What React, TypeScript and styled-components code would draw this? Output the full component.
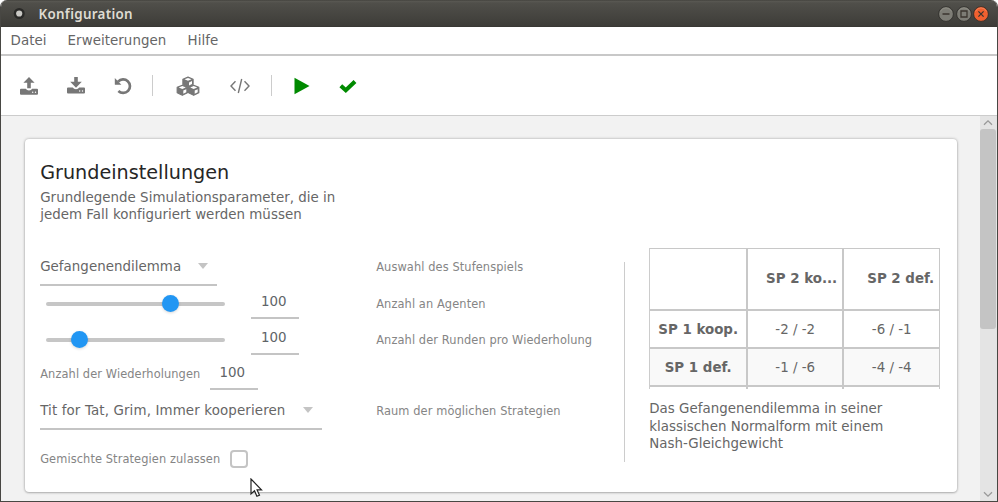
import React from 'react';
import styled, { createGlobalStyle } from 'styled-components';

const GlobalStyle = createGlobalStyle`
  * { box-sizing: border-box; }
  html, body { margin: 0; padding: 0; background: #fff; overflow: hidden; }
  body { font-family: "DejaVu Sans", Verdana, sans-serif; color: #666; }
`;

const Window = styled.div`
  position: relative;
  width: 998px;
  height: 502px;
  display: flex;
  flex-direction: column;
  border: 1px solid #484743;
  border-top: 0;
  border-radius: 7px 7px 0 0;
  overflow: hidden;
  background: #fff;
`;

const TitleBar = styled.header`
  flex: none;
  height: 27px;
  margin: 0 -1px;
  padding: 0 9px 0 12px;
  display: flex;
  align-items: center;
  background: linear-gradient(#3b3a36 0, #5a5953 1px, #504f4a 3px, #3d3c38 26px, #353430 27px);
`;

const Title = styled.h1`
  margin: 0 auto 0 10.5px;
  font: 600 13.4px/26px "Noto Sans", sans-serif;
  letter-spacing: 0.3px;
  color: #dfdbd2;
`;

const WindowButtons = styled.div`
  display: flex;
  gap: 1.5px;
`;

const MenuBar = styled.nav`
  flex: none;
  height: 28.5px;
  padding: 0 9.6px;
  display: flex;
  gap: 22px;
  border-bottom: 2px solid #c8c8c8;
`;

const MenuItem = styled.span<{ $width: number }>`
  width: ${p => p.$width}px;
  font-size: 13.4px;
  letter-spacing: 0.05px;
  line-height: 27px;
  white-space: nowrap;
`;

const Toolbar = styled.div`
  flex: none;
  height: 60.5px;
  padding: 1.5px 0 0 9px;
  display: flex;
  align-items: center;
  border-bottom: 1px solid #ccc;
`;

const ToolButton = styled.button<{ $width: number; $after: number }>`
  width: ${p => p.$width}px;
  height: 42px;
  margin: 0 ${p => p.$after}px 0 0;
  padding: 0;
  border: 0;
  border-radius: 4px;
  background: transparent;
  display: flex;
  align-items: center;
  justify-content: center;
`;

const ToolDivider = styled.span<{ $after: number }>`
  width: 1px;
  height: 21px;
  margin: 0 ${p => p.$after}px 1px 0;
  background: #ccc;
`;

const Body = styled.div`
  flex: 1;
  min-height: 0;
  display: flex;
  justify-content: space-between;
  background: #f2f2f2;
`;

const Card = styled.main`
  width: 932px;
  height: 353px;
  margin: 23px 0 0 24px;
  padding: 20px 15px 0 15.2px;
  background: #fff;
  border-radius: 4px;
  box-shadow: 0 0 3px rgba(0, 0, 0, 0.32), 0 1px 2px rgba(0, 0, 0, 0.16);
`;

const Heading = styled.h2`
  margin: 0;
  font-size: 19.2px;
  font-weight: 400;
  line-height: 27px;
  color: #262626;
`;

const Paragraph = styled.p<{ $width: number; $top?: number }>`
  margin: ${p => p.$top ?? 0}px 0 0;
  width: ${p => p.$width}px;
  font-size: 13.4px;
  line-height: 17.3px;
  letter-spacing: 0.03px;
`;

const Columns = styled.div`
  margin-top: 24.4px;
  display: flex;
  align-items: flex-start;
`;

const Form = styled.div`
  width: 584px;
`;

const Row = styled.div<{ $height: number }>`
  height: ${p => p.$height}px;
  display: grid;
  grid-template-columns: 336px 1fr;
`;

const Control = styled.div`
  display: flex;
  align-items: flex-start;
`;

const Label = styled.span<{ $top?: number }>`
  padding-top: ${p => p.$top ?? 0}px;
  font-size: 11.4px;
  line-height: 16px;
  letter-spacing: 0.1px;
  color: #858585;
  white-space: nowrap;
`;

const Select = styled.div<{ $width: number; $spacing?: number }>`
  width: ${p => p.$width}px;
  height: 38px;
  padding: 1px 9px 0 0;
  display: flex;
  align-items: center;
  justify-content: space-between;
  border-bottom: 2px solid #c4c4c4;
  font-size: 13.4px;
  letter-spacing: ${p => p.$spacing ?? 0.03}px;
  white-space: nowrap;
`;

const Caret = styled.span`
  border: 5px solid transparent;
  border-top: 6px solid #c4c4c4;
  border-bottom: 0;
`;

const Slider = styled.div`
  width: 179px;
  height: 4px;
  margin: 16px 26px 0 6px;
  display: flex;
  align-items: center;
  border-radius: 2px;
  background: #c6c6c6;
`;

const Thumb = styled.span<{ $offset: number }>`
  width: 17px;
  height: 17px;
  margin-left: ${p => p.$offset}px;
  border-radius: 50%;
  background: #2196f3;
  box-shadow: 0 1px 3px rgba(0, 0, 0, 0.16);
`;

const NumberField = styled.span<{ $before?: number }>`
  width: 48px;
  height: 33px;
  margin-left: ${p => p.$before ?? 0}px;
  padding-right: 3px;
  border-bottom: 2px solid #c4c4c4;
  font-size: 13.4px;
  line-height: 32px;
  text-align: center;
  color: #606468;
`;

const Checkbox = styled.span`
  width: 18px;
  height: 18px;
  margin-left: 10px;
  border: 2px solid #c4c4c4;
  border-radius: 4px;
`;

const Divider = styled.div`
  width: 1px;
  height: 200px;
  margin: 14px 24px 0 0;
  background: #ccc;
`;

const GameInfo = styled.section`
  width: 292px;
`;

const Matrix = styled.div`
  display: grid;
  grid-template-columns: 98px 96px 96px;
  grid-template-rows: 63px 38.5px 38px 2px;
  margin-bottom: 11px;
  width: 291px;
  border-left: 1px solid #ccc;
`;

const Cell = styled.div<{ $head?: boolean; $bold?: boolean; $shade?: boolean; $last?: boolean }>`
  display: flex;
  align-items: center;
  justify-content: ${p => (p.$head ? 'flex-end' : 'center')};
  padding-right: ${p => (p.$head ? 5 : 0)}px;
  border-right: ${p => (p.$last ? 1 : 2)}px solid #c8c8c8;
  border-bottom: 2px solid #c8c8c8;
  border-top: ${p => (p.$head ? '1px solid #c8c8c8' : '0')};
  background: ${p => (p.$shade ? '#f9f9f9' : '#fff')};
  font-size: 13.4px;
  font-weight: ${p => (p.$bold ? 700 : 400)};
  white-space: nowrap;
`;

const Stub = styled.div<{ $last?: boolean }>`
  border-right: ${p => (p.$last ? 1 : 2)}px solid #c8c8c8;
`;

const Scrollbar = styled.div`
  width: 17px;
  padding: 0 1px 0 0;
  display: flex;
  flex-direction: column;
  align-items: center;
  background: #e4e4e4;
`;

const ScrollArrow = styled.span`
  height: 13px;
  display: flex;
  align-items: center;
`;

const ScrollThumb = styled.span`
  width: 16px;
  height: 200px;
  margin-bottom: auto;
  border-radius: 3px;
  background: #c4c4c4;
`;

const Pointer = styled.svg`
  position: absolute;
  left: 248px;
  top: 478px;
`;

const DriveIcon = ({ down }: { down?: boolean }) => (
  <svg width="20" height="20" viewBox="0 0 20 20" fill="#777">
    {down
      ? <path d="M8.2 .9h3.6v4.9h4L10 11.8 4.2 5.8h4z" />
      : <path d="M10 1.1l5.6 5.7h-3.8v5.5H8.2V6.8H4.4z" />}
    <path transform={down ? 'translate(0 -1.2)' : undefined} d="M2 12.8h4.8q1 1.7 3.2 1.7t3.2-1.7H18q1 0 1 1v4q0 1-1 1H2q-1 0-1-1v-4q0-1 1-1z" />
    <circle cx="13.7" cy={down ? 15 : 16.2} r=".7" fill="#fff" />
    <circle cx="16.5" cy={down ? 15 : 16.2} r=".7" fill="#fff" />
  </svg>
);

const UndoIcon = () => (
  <svg width="18" height="18" viewBox="0 0 18 18" fill="none">
    <path d="M4.1 4.6A6.8 6.8 0 1 1 4.4 14" stroke="#777" strokeWidth="2.7" />
    <path d="M.8 1.1v6.2q0 .5.5.5h6.1z" fill="#777" />
  </svg>
);

const Cube = ({ x, y }: { x: number; y: number }) => (
  <g transform={`translate(${x} ${y})`}>
    <path d="M6 .9l5.1 2.1v5.4L6 10.9.9 8.4V3z" fill="#777" stroke="#777" strokeWidth="1.2" strokeLinejoin="round" />
    <path d="M6 1.7l3.5 1.4L6 4.6 2.5 3.1zM7 6.2l3-1.3v2.9L7 9.4z" fill="#fff" />
  </g>
);

const CubesIcon = () => (
  <svg width="24" height="20" viewBox="0 0 24 20">
    <Cube x={6} y={0.2} />
    <Cube x={0.3} y={8.4} />
    <Cube x={11.7} y={8.4} />
  </svg>
);

const CodeIcon = () => (
  <svg width="20" height="16" viewBox="0 0 20 16" fill="none" stroke="#777" strokeWidth="1.4">
    <path d="M5.5 3.3L1 8l4.5 4.7M14.5 3.3L19 8l-4.5 4.7M11.7 1L8.3 15" />
  </svg>
);

const PlayIcon = () => (
  <svg width="16" height="18" viewBox="0 0 16 18"><path d="M.5.7L15.5 9 .5 17.3z" fill="#008a00" /></svg>
);

const CheckIcon = () => (
  <svg width="18" height="16" viewBox="0 0 18 16" fill="none">
    <path d="M1.8 7.7l5 4.6L16 3.5" stroke="#008a00" strokeWidth="4.1" />
  </svg>
);

const AppIcon = () => (
  <svg width="16" height="16" viewBox="0 0 16 16">
    <circle cx="7.2" cy="7.5" r="5.5" fill="#292927" />
    <circle cx="7.2" cy="7.5" r="3.1" fill="#c9c8c4" />
  </svg>
);

type WindowButtonKind = 'minimize' | 'maximize' | 'close';

const buttonMarks: Record<WindowButtonKind, string> = {
  minimize: 'M4.5 8h7',
  maximize: 'M5 5h6v6H5z',
  close: 'M5.4 5.4l5.2 5.2M10.6 5.4l-5.2 5.2',
};

const WindowButton = ({ kind }: { kind: WindowButtonKind }) => (
  <svg width="16" height="16" viewBox="0 0 16 16">
    <circle cx="8" cy="8" r="7.4" fill={kind === 'close' ? '#f0602f' : '#7d7c75'} stroke="#302f2b" strokeWidth=".9" />
    <path d="M2.5 5.5a6 6 0 0 1 11 0" fill="none" stroke={kind === 'close' ? '#f58a63' : '#918f87'} strokeWidth=".8" />
    <path d={buttonMarks[kind]} fill="none" stroke="#3b352f" strokeWidth="1.3" />
  </svg>
);

const Chevron = ({ down }: { down?: boolean }) => (
  <svg width="10" height="7" viewBox="0 0 10 7">
    <path d={down ? 'M1 1.2l4 4 4-4' : 'M1 5.8l4-4 4 4'} fill="none" stroke="#999" strokeWidth="1.3" />
  </svg>
);

export default function App() {
  return (
    <>
      <GlobalStyle />
      <Window>
        <TitleBar>
          <AppIcon />
          <Title>Konfiguration</Title>
          <WindowButtons>
            <WindowButton kind="minimize" />
            <WindowButton kind="maximize" />
            <WindowButton kind="close" />
          </WindowButtons>
        </TitleBar>
        <MenuBar>
          <MenuItem $width={35}>Datei</MenuItem>
          <MenuItem $width={98}>Erweiterungen</MenuItem>
          <MenuItem $width={32}>Hilfe</MenuItem>
        </MenuBar>
        <Toolbar>
          <ToolButton $width={38} $after={9}><DriveIcon /></ToolButton>
          <ToolButton $width={38} $after={9}><DriveIcon down /></ToolButton>
          <ToolButton $width={37} $after={11}><UndoIcon /></ToolButton>
          <ToolDivider $after={13} />
          <ToolButton $width={43} $after={11}><CubesIcon /></ToolButton>
          <ToolButton $width={40} $after={11}><CodeIcon /></ToolButton>
          <ToolDivider $after={12.5} />
          <ToolButton $width={35} $after={9}><PlayIcon /></ToolButton>
          <ToolButton $width={39} $after={0}><CheckIcon /></ToolButton>
        </Toolbar>
        <Body>
          <Card>
            <Heading>Grundeinstellungen</Heading>
            <Paragraph $width={305} $top={3}>Grundlegende Simulationsparameter, die in jedem Fall konfiguriert werden müssen</Paragraph>
            <Columns>
              <Form>
                <Row $height={38}>
                  <Control><Select $width={177}>Gefangenendilemma<Caret /></Select></Control>
                  <Label $top={11}>Auswahl des Stufenspiels</Label>
                </Row>
                <Row $height={36}>
                  <Control>
                    <Slider><Thumb $offset={116} /></Slider>
                    <NumberField>100</NumberField>
                  </Control>
                  <Label $top={10}>Anzahl an Agenten</Label>
                </Row>
                <Row $height={35}>
                  <Control>
                    <Slider><Thumb $offset={25} /></Slider>
                    <NumberField>100</NumberField>
                  </Control>
                  <Label $top={10}>Anzahl der Runden pro Wiederholung</Label>
                </Row>
                <Row $height={35}>
                  <Control>
                    <Label $top={9}>Anzahl der Wiederholungen</Label>
                    <NumberField $before={9.5}>100</NumberField>
                  </Control>
                </Row>
                <Row $height={58}>
                  <Control><Select $width={282} $spacing={0.13}>Tit for Tat, Grim, Immer kooperieren<Caret /></Select></Control>
                  <Label $top={11}>Raum der möglichen Strategien</Label>
                </Row>
                <Row $height={18}>
                  <Control>
                    <Label $top={1}>Gemischte Strategien zulassen</Label>
                    <Checkbox />
                  </Control>
                </Row>
              </Form>
              <Divider />
              <GameInfo>
                <Matrix>
                  <Cell $head />
                  <Cell $head $bold>SP 2 ko...</Cell>
                  <Cell $head $bold $last>SP 2 def.</Cell>
                  <Cell $bold>SP 1 koop.</Cell>
                  <Cell>-2 / -2</Cell>
                  <Cell $last>-6 / -1</Cell>
                  <Cell $bold $shade>SP 1 def.</Cell>
                  <Cell $shade>-1 / -6</Cell>
                  <Cell $shade $last>-4 / -4</Cell>
                  <Stub /><Stub /><Stub $last />
                </Matrix>
                <Paragraph $width={270}>Das Gefangenendilemma in seiner klassischen Normalform mit einem Nash-Gleichgewicht</Paragraph>
              </GameInfo>
            </Columns>
          </Card>
          <Scrollbar>
            <ScrollArrow><Chevron /></ScrollArrow>
            <ScrollThumb />
            <ScrollArrow><Chevron down /></ScrollArrow>
          </Scrollbar>
        </Body>
        <Pointer width="15" height="20" viewBox="0 0 15 20">
          <path d="M2 1v15l3.5-3.2 2.4 5.5 2.6-1.1-2.4-5.3h4.4z" fill="#fff" stroke="#222" strokeWidth="1.2" />
        </Pointer>
      </Window>
    </>
  );
}
